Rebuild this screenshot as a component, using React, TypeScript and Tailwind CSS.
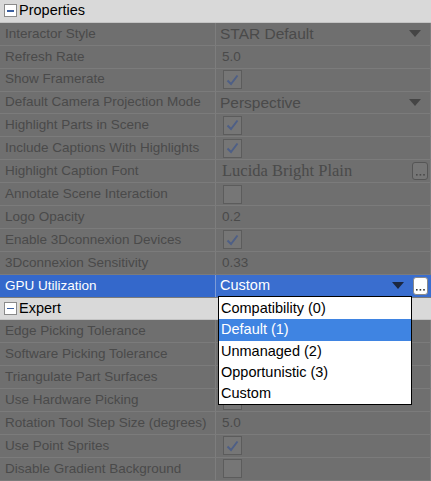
import React from 'react';

type Kind = 'combo' | 'text' | 'check' | 'uncheck' | 'font' | 'none';

interface Prop {
  label: string;
  kind: Kind;
  value?: string;
}

const props1: Prop[] = [
  { label: 'Interactor Style', kind: 'combo', value: 'STAR Default' },
  { label: 'Refresh Rate', kind: 'text', value: '5.0' },
  { label: 'Show Framerate', kind: 'check' },
  { label: 'Default Camera Projection Mode', kind: 'combo', value: 'Perspective' },
  { label: 'Highlight Parts in Scene', kind: 'check' },
  { label: 'Include Captions With Highlights', kind: 'check' },
  { label: 'Highlight Caption Font', kind: 'font', value: 'Lucida Bright Plain' },
  { label: 'Annotate Scene Interaction', kind: 'uncheck' },
  { label: 'Logo Opacity', kind: 'text', value: '0.2' },
  { label: 'Enable 3Dconnexion Devices', kind: 'check' },
  { label: '3Dconnexion Sensitivity', kind: 'text', value: '0.33' },
];

// values of the first rows sit under the open list
const props2: Prop[] = [
  { label: 'Edge Picking Tolerance', kind: 'none' },
  { label: 'Software Picking Tolerance', kind: 'none' },
  { label: 'Triangulate Part Surfaces', kind: 'none' },
  { label: 'Use Hardware Picking', kind: 'uncheck' },
  { label: 'Rotation Tool Step Size (degrees)', kind: 'text', value: '5.0' },
  { label: 'Use Point Sprites', kind: 'check' },
  { label: 'Disable Gradient Background', kind: 'uncheck' },
];

const options = ['Compatibility (0)', 'Default (1)', 'Unmanaged (2)', 'Opportunistic (3)', 'Custom'];

const Arrow = ({ color }: { color: string }) => (
  <svg width="12" height="7" viewBox="0 0 12 7" className="mr-[9px] shrink-0">
    <path d="M0 0 L12 0 L6 7 Z" fill={color} />
  </svg>
);

const Check = ({ on }: { on: boolean }) => (
  <div className="ml-[7px] w-[19px] h-[19px] border border-[#5c5c5c] bg-[#767676] flex items-center justify-center">
    {on && (
      <svg width="13" height="12" viewBox="0 0 13 12">
        <path d="M1.5 6.5 L5 10 L11.5 1.5" fill="none" stroke="#4e5f86" strokeWidth="2" />
      </svg>
    )}
  </div>
);

const Dots = ({ color }: { color: string }) => (
  <svg width="9" height="3" viewBox="0 0 9 3" className="mb-[3px]">
    <rect x="0" y="1" width="1.6" height="1.6" fill={color} />
    <rect x="3.6" y="1" width="1.6" height="1.6" fill={color} />
    <rect x="7.2" y="1" width="1.6" height="1.6" fill={color} />
  </svg>
);

const Minus = () => (
  <div className="ml-[4px] mr-[2px] w-[13px] h-[13px] border border-[#8a8a8a] bg-white flex items-center justify-center">
    <div className="w-[7px] h-[1.5px] bg-[#3b5fa0]" />
  </div>
);

const Category = ({ title }: { title: string }) => (
  <div className="h-[22.9px] flex items-center bg-[#d9d9d9] border-b border-[#c4c4c4] text-[14.5px] text-black">
    <Minus />
    <span>{title}</span>
  </div>
);

const Row = ({ p }: { p: Prop }) => (
  <div className="h-[22.9px] flex border-b border-[#7b7b7b] bg-[#6f6f6f]">
    <div className="w-[216px] shrink-0 flex items-center pl-[5px] border-r border-[#7d7d7d] text-[13.5px] text-[#4a4a4a] whitespace-nowrap overflow-hidden">
      {p.label}
    </div>
    <div className="flex-1 flex items-center border-r border-[#7e7e7e] text-[#4a4a4a] whitespace-nowrap overflow-hidden">
      {p.kind === 'combo' && (
        <>
          <span className="pl-[4px] text-[15.5px] flex-1">{p.value}</span>
          <Arrow color="#454545" />
        </>
      )}
      {p.kind === 'text' && <span className="pl-[6px] text-[13.5px]">{p.value}</span>}
      {p.kind === 'check' && <Check on />}
      {p.kind === 'uncheck' && <Check on={false} />}
      {p.kind === 'font' && (
        <>
          <span className="pl-[6px] text-[16.5px] flex-1 font-['Liberation_Serif',serif]">{p.value}</span>
          <div className="mr-[2px] w-[16px] h-[18px] rounded-[3px] border border-[#555] bg-[#767676] flex items-end justify-center">
            <Dots color="#4a4a4a" />
          </div>
        </>
      )}
    </div>
  </div>
);

export default function App() {
  return (
    <div className="relative w-[431px] h-[481px] overflow-hidden bg-[#6f6f6f] font-['Liberation_Sans',Arial,sans-serif]">
      <Category title="Properties" />
      {props1.map((p) => (
        <Row key={p.label} p={p} />
      ))}
      <div className="h-[22.9px] flex border-b border-[#7b7b7b]">
        <div className="w-[216px] shrink-0 flex items-center pl-[5px] bg-[#3468cb] border-r border-[#7d9bd6] text-[13.5px] text-white">
          GPU Utilization
        </div>
        <div className="flex-1 flex items-center bg-[#3a6ecf] text-white">
          <span className="pl-[4px] text-[14.5px] flex-1">Custom</span>
          <Arrow color="#1b2740" />
          <div className="mr-[3px] w-[15px] h-[18px] rounded-[3px] border border-[#8a8a8a] bg-white flex items-end justify-center">
            <Dots color="#333" />
          </div>
        </div>
      </div>
      <Category title="Expert" />
      {props2.map((p) => (
        <Row key={p.label} p={p} />
      ))}

      {/* open dropdown list */}
      <div className="absolute left-[218px] top-[296px] w-[194px] h-[109px] bg-white border border-black pt-[1px]">
        {options.map((o) => (
          <div
            key={o}
            className={
              o === 'Default (1)'
                ? 'h-[21.4px] flex items-center pl-[2px] text-[14.5px] bg-[#3f84e2] text-white'
                : 'h-[21.4px] flex items-center pl-[2px] text-[14.5px] text-black'
            }
          >
            {o}
          </div>
        ))}
      </div>
    </div>
  );
}
